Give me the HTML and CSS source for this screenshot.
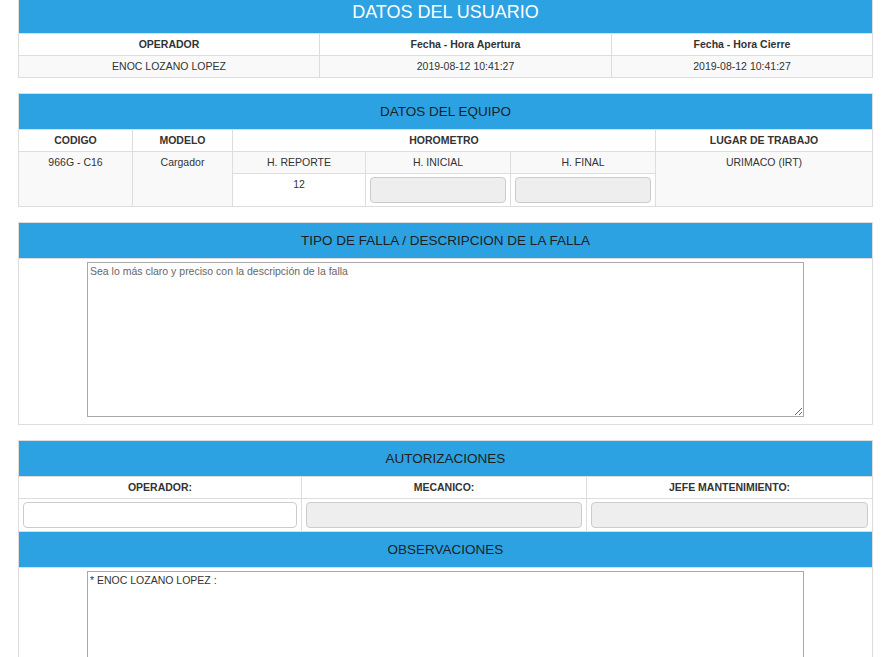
FILE: index.html
```html
<!DOCTYPE html>
<html lang="es">
<head>
<meta charset="utf-8">
<title>Reporte de falla</title>
<link rel="stylesheet" href="styles.css">
</head>
<body>
<div class="panel user">
  <div class="ph ph-big">DATOS DEL USUARIO</div>
  <div class="c b">OPERADOR</div>
  <div class="c b">Fecha - Hora Apertura</div>
  <div class="c b">Fecha - Hora Cierre</div>
  <div class="c alt">ENOC LOZANO LOPEZ</div>
  <div class="c alt">2019-08-12 10:41:27</div>
  <div class="c alt">2019-08-12 10:41:27</div>
</div>

<div class="panel equipo">
  <div class="ph">DATOS DEL EQUIPO</div>
  <div class="c b">CODIGO</div>
  <div class="c b">MODELO</div>
  <div class="c b span3">HOROMETRO</div>
  <div class="c b">LUGAR DE TRABAJO</div>
  <div class="c alt rs">966G - C16</div>
  <div class="c alt rs">Cargador</div>
  <div class="c alt">H. REPORTE</div>
  <div class="c alt">H. INICIAL</div>
  <div class="c alt">H. FINAL</div>
  <div class="c alt rs">URIMACO (IRT)</div>
  <div class="c">12</div>
  <div class="c inp"><input class="field" type="text" disabled></div>
  <div class="c inp"><input class="field" type="text" disabled></div>
</div>

<div class="panel single">
  <div class="ph">TIPO DE FALLA / DESCRIPCION DE LA FALLA</div>
  <div class="c ta-cell"><textarea class="ta" placeholder="Sea lo más claro y preciso con la descripción de la falla"></textarea></div>
</div>

<div class="panel auth">
  <div class="ph">AUTORIZACIONES</div>
  <div class="c b">OPERADOR:</div>
  <div class="c b">MECANICO:</div>
  <div class="c b">JEFE MANTENIMIENTO:</div>
  <div class="c inp"><input class="field on" type="text"></div>
  <div class="c inp"><input class="field" type="text" disabled></div>
  <div class="c inp"><input class="field" type="text" disabled></div>
  <div class="ph">OBSERVACIONES</div>
  <div class="c ta-cell full"><textarea class="ta">* ENOC LOZANO LOPEZ :</textarea></div>
</div>
</body>
</html>
```
FILE: styles.css
```css
html, body {
  margin: 0;
  padding: 0;
  background: #fff;
}
body {
  font-family: "Liberation Sans", Arial, sans-serif;
  font-size: 10.5px;
  color: #333;
}
.panel {
  display: grid;
  gap: 1px;
  background: #ddd;
  border: 1px solid #ddd;
  width: 855px;
  box-sizing: border-box;
  margin: 0 0 15px 18px;
}
.user {
  border-top: 0;
  grid-template-columns: 300px 291px 260px;
}
.equipo {
  grid-template-columns: 113px 99px 132px 144px 144px 216px;
}
.single {
  grid-template-columns: 1fr;
}
.auth {
  grid-template-columns: 282px 284px 285px;
}
.ph {
  grid-column: 1 / -1;
  background: #2ca2e2;
  color: #1e1e1e;
  text-align: center;
  font-size: 13.5px;
  line-height: 17px;
  padding: 9px 0;
}
.ph-big {
  color: #fff;
  font-size: 18px;
  line-height: 20px;
  padding: 2px 0 11px;
}
.c {
  background: #fff;
  text-align: center;
  line-height: 13px;
  padding: 4px 5px;
}
.b { font-weight: bold; }
.alt { background: #f9f9f9; }
.span3 { grid-column: span 3; }
.rs { grid-row: span 2; }
.full { grid-column: 1 / -1; }
.inp {
  padding: 3px 4px;
  display: flex;
}
.field {
  flex: 1;
  min-width: 0;
  height: 26px;
  box-sizing: border-box;
  margin: 0;
  border: 1px solid #ccc;
  border-radius: 4px;
  background: #eee;
  font: inherit;
}
.field.on { background: #fff; }
.ta-cell {
  padding: 3px 0 7px;
  display: flex;
  justify-content: center;
}
.ta {
  display: block;
  width: 717px;
  height: 155px;
  box-sizing: border-box;
  margin: 0;
  padding: 2px;
  border: 1px solid #a9a9a9;
  font-family: "Liberation Sans", Arial, sans-serif;
  font-size: 10.5px;
  color: #333;
  background: #fff;
}
.ta::placeholder { color: #666; }
```
